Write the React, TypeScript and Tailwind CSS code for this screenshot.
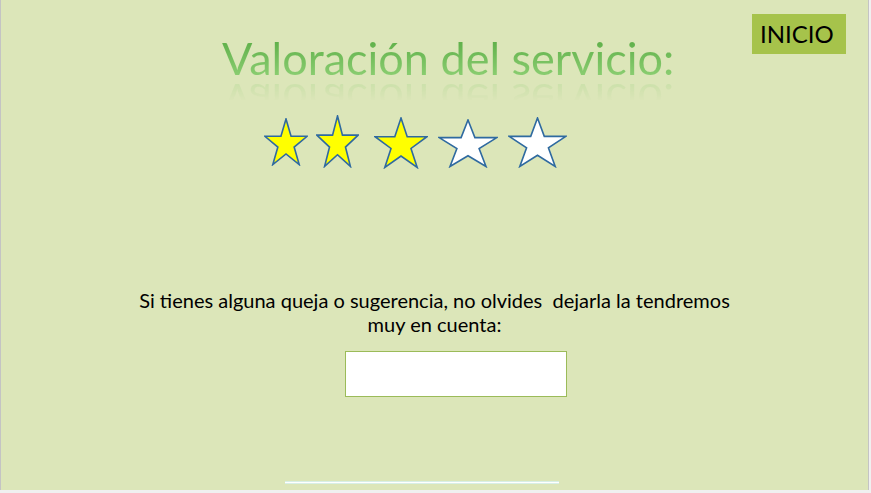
import React from 'react';

const font = { fontFamily: 'Lato, "Open Sans", sans-serif' };

const stars = [
  { w: 44, h: 48, top: 118, left: 263, on: true },
  { w: 43, h: 53, top: 115, left: 315, on: true },
  { w: 54, h: 52, top: 117, left: 373, on: true },
  { w: 60, h: 49, top: 119, left: 437, on: false },
  { w: 59, h: 51, top: 117, left: 507, on: false },
];

function Star({ w, h, on }: { w: number; h: number; on: boolean }) {
  return (
    <svg width={w} height={h} viewBox="0 0 100 100" preserveAspectRatio="none">
      <polygon
        points="50,2 61.5,38 98,38 68.5,60.5 80,97 50,75 20,97 31.5,60.5 2,38 38.5,38"
        fill={on ? '#ffff00' : '#ffffff'}
        stroke="#2f6aa0"
        strokeWidth="1.6"
        vectorEffect="non-scaling-stroke"
        strokeLinejoin="miter"
      />
    </svg>
  );
}

export default function App() {
  return (
    <div className="w-[871px] h-[493px] bg-[#f0f0f0] overflow-hidden" style={font}>
      <div className="w-[869px] h-[490px] bg-[#dce6b9] border-l border-r border-[#c4c4c4] flex flex-col">
        {/* title + inicio */}
        <div className="flex items-start h-[100px]">
          <h1 className="ml-[221px] mt-[31px] text-[45px] leading-[55px] font-normal bg-gradient-to-b from-[#52a83e] to-[#97d67c] bg-clip-text text-transparent [-webkit-box-reflect:below_-13px_linear-gradient(transparent_50%,rgba(255,255,255,0.3))]">
            Valoración del servicio:
          </h1>
          <button className="ml-auto mr-[22px] mt-[14px] w-[94px] h-[40px] bg-[#a6c34b] text-black text-[24px] leading-none pl-[8px] text-left">
            INICIO
          </button>
        </div>

        {/* stars */}
        <div className="flex items-start h-[80px]">
          {stars.map((s, i) => (
            <div
              key={i}
              className="shrink-0"
              style={{
                marginLeft: i === 0 ? s.left : s.left - (stars[i - 1].left + stars[i - 1].w),
                marginTop: s.top - 100,
              }}
            >
              <Star w={s.w} h={s.h} on={s.on} />
            </div>
          ))}
        </div>

        {/* message */}
        <p className="mt-[108px] text-center text-[20px] leading-[24px] text-black">
          Si tienes alguna queja o sugerencia, no olvides{'\u00a0 '}dejarla la tendremos
          <br />
          muy en cuenta:
        </p>

        <input
          className="ml-[344px] mt-[15px] w-[222px] h-[46px] bg-white border border-[#9bbb59] outline-none"
          type="text"
        />

        <div className="mt-auto mb-[6px] ml-[284px] w-[274px] h-[3px] bg-white border-y border-[#d8efe6]" />
      </div>
    </div>
  );
}
